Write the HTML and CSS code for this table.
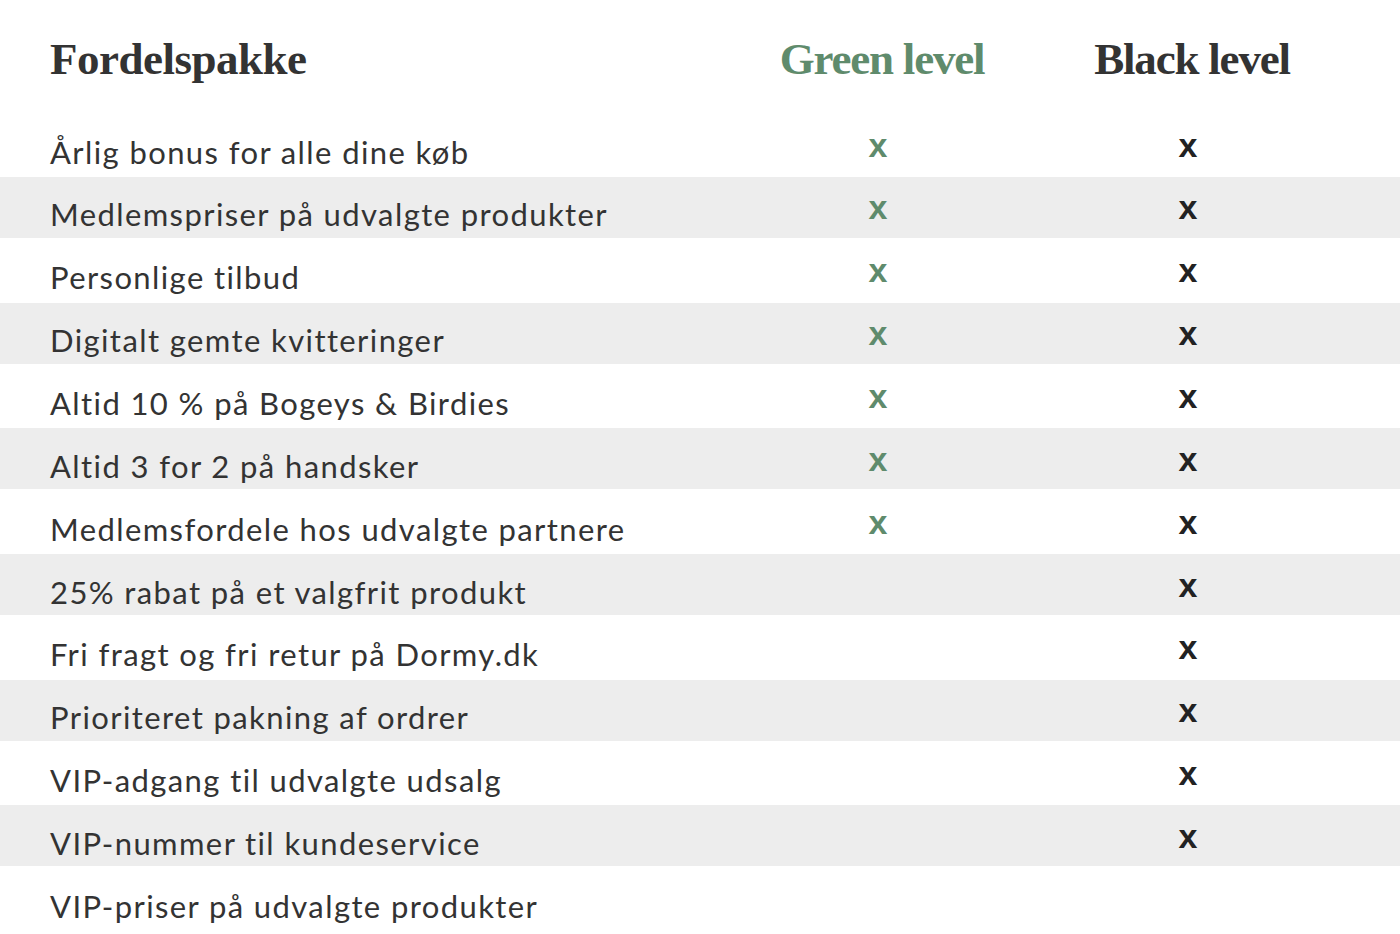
FILE: index.html
```html
<!DOCTYPE html>
<html lang="da">
<head>
<meta charset="utf-8">
<title>Fordelspakke</title>
<link rel="stylesheet" href="styles.css">
</head>
<body>
<main class="compare">
  <div class="row head">
    <h1 class="heading title">Fordelspakke</h1>
    <h2 class="heading level green">Green level</h2>
    <h2 class="heading level black">Black level</h2>
  </div>
  <div class="row"><span class="label">Årlig bonus for alle dine køb</span><span class="mark green">x</span><span class="mark black">x</span></div>
  <div class="row"><span class="label">Medlemspriser på udvalgte produkter</span><span class="mark green">x</span><span class="mark black">x</span></div>
  <div class="row"><span class="label">Personlige tilbud</span><span class="mark green">x</span><span class="mark black">x</span></div>
  <div class="row"><span class="label">Digitalt gemte kvitteringer</span><span class="mark green">x</span><span class="mark black">x</span></div>
  <div class="row"><span class="label">Altid 10 % på Bogeys &amp; Birdies</span><span class="mark green">x</span><span class="mark black">x</span></div>
  <div class="row"><span class="label">Altid 3 for 2 på handsker</span><span class="mark green">x</span><span class="mark black">x</span></div>
  <div class="row"><span class="label">Medlemsfordele hos udvalgte partnere</span><span class="mark green">x</span><span class="mark black">x</span></div>
  <div class="row"><span class="label">25% rabat på et valgfrit produkt</span><span class="mark green"></span><span class="mark black">x</span></div>
  <div class="row"><span class="label">Fri fragt og fri retur på Dormy.dk</span><span class="mark green"></span><span class="mark black">x</span></div>
  <div class="row"><span class="label">Prioriteret pakning af ordrer</span><span class="mark green"></span><span class="mark black">x</span></div>
  <div class="row"><span class="label">VIP-adgang til udvalgte udsalg</span><span class="mark green"></span><span class="mark black">x</span></div>
  <div class="row"><span class="label">VIP-nummer til kundeservice</span><span class="mark green"></span><span class="mark black">x</span></div>
  <div class="row"><span class="label">VIP-priser på udvalgte produkter</span><span class="mark green"></span><span class="mark black"></span></div>
</main>
</body>
</html>
```

FILE: styles.css
```css
* { box-sizing: border-box; }

html, body {
  margin: 0;
  padding: 0;
  background: #ffffff;
}

body {
  width: 1400px;
  height: 934px;
  overflow: hidden;
  font-family: Lato, "Open Sans", sans-serif;
  color: #333333;
}

.compare {
  display: flex;
  flex-direction: column;
}

.row {
  display: grid;
  grid-template-columns: 1fr 310px 310px;
  align-items: center;
  padding: 0 53px 0 50px;
  height: 64.7px;
}

.row:nth-child(odd) {
  background: #ededed;
  height: 61px;
}

.row.head {
  height: 112.3px;
  align-items: start;
  padding-top: 37px;
  background: #ffffff;
}

.heading {
  margin: 0;
  font-family: "Liberation Serif", "Times New Roman", serif;
  font-weight: 700;
  font-size: 45px;
  line-height: 45px;
  letter-spacing: -1.2px;
  color: #333333;
}

.heading.title {
  letter-spacing: -0.5px;
}

.level {
  text-align: center;
}

.level.green {
  color: #5f8b6c;
}

.label {
  font-size: 31px;
  line-height: 36px;
  letter-spacing: 1.4px;
  padding-top: 14px;
  white-space: nowrap;
}

.mark {
  text-align: center;
  padding-right: 8px;
  font-family: "Liberation Sans", Arial, sans-serif;
  font-weight: 700;
  font-size: 34px;
  line-height: 34px;
  min-height: 34px;
}

.mark.green { color: #5f8b6c; }
.mark.black { color: #222222; }
```
